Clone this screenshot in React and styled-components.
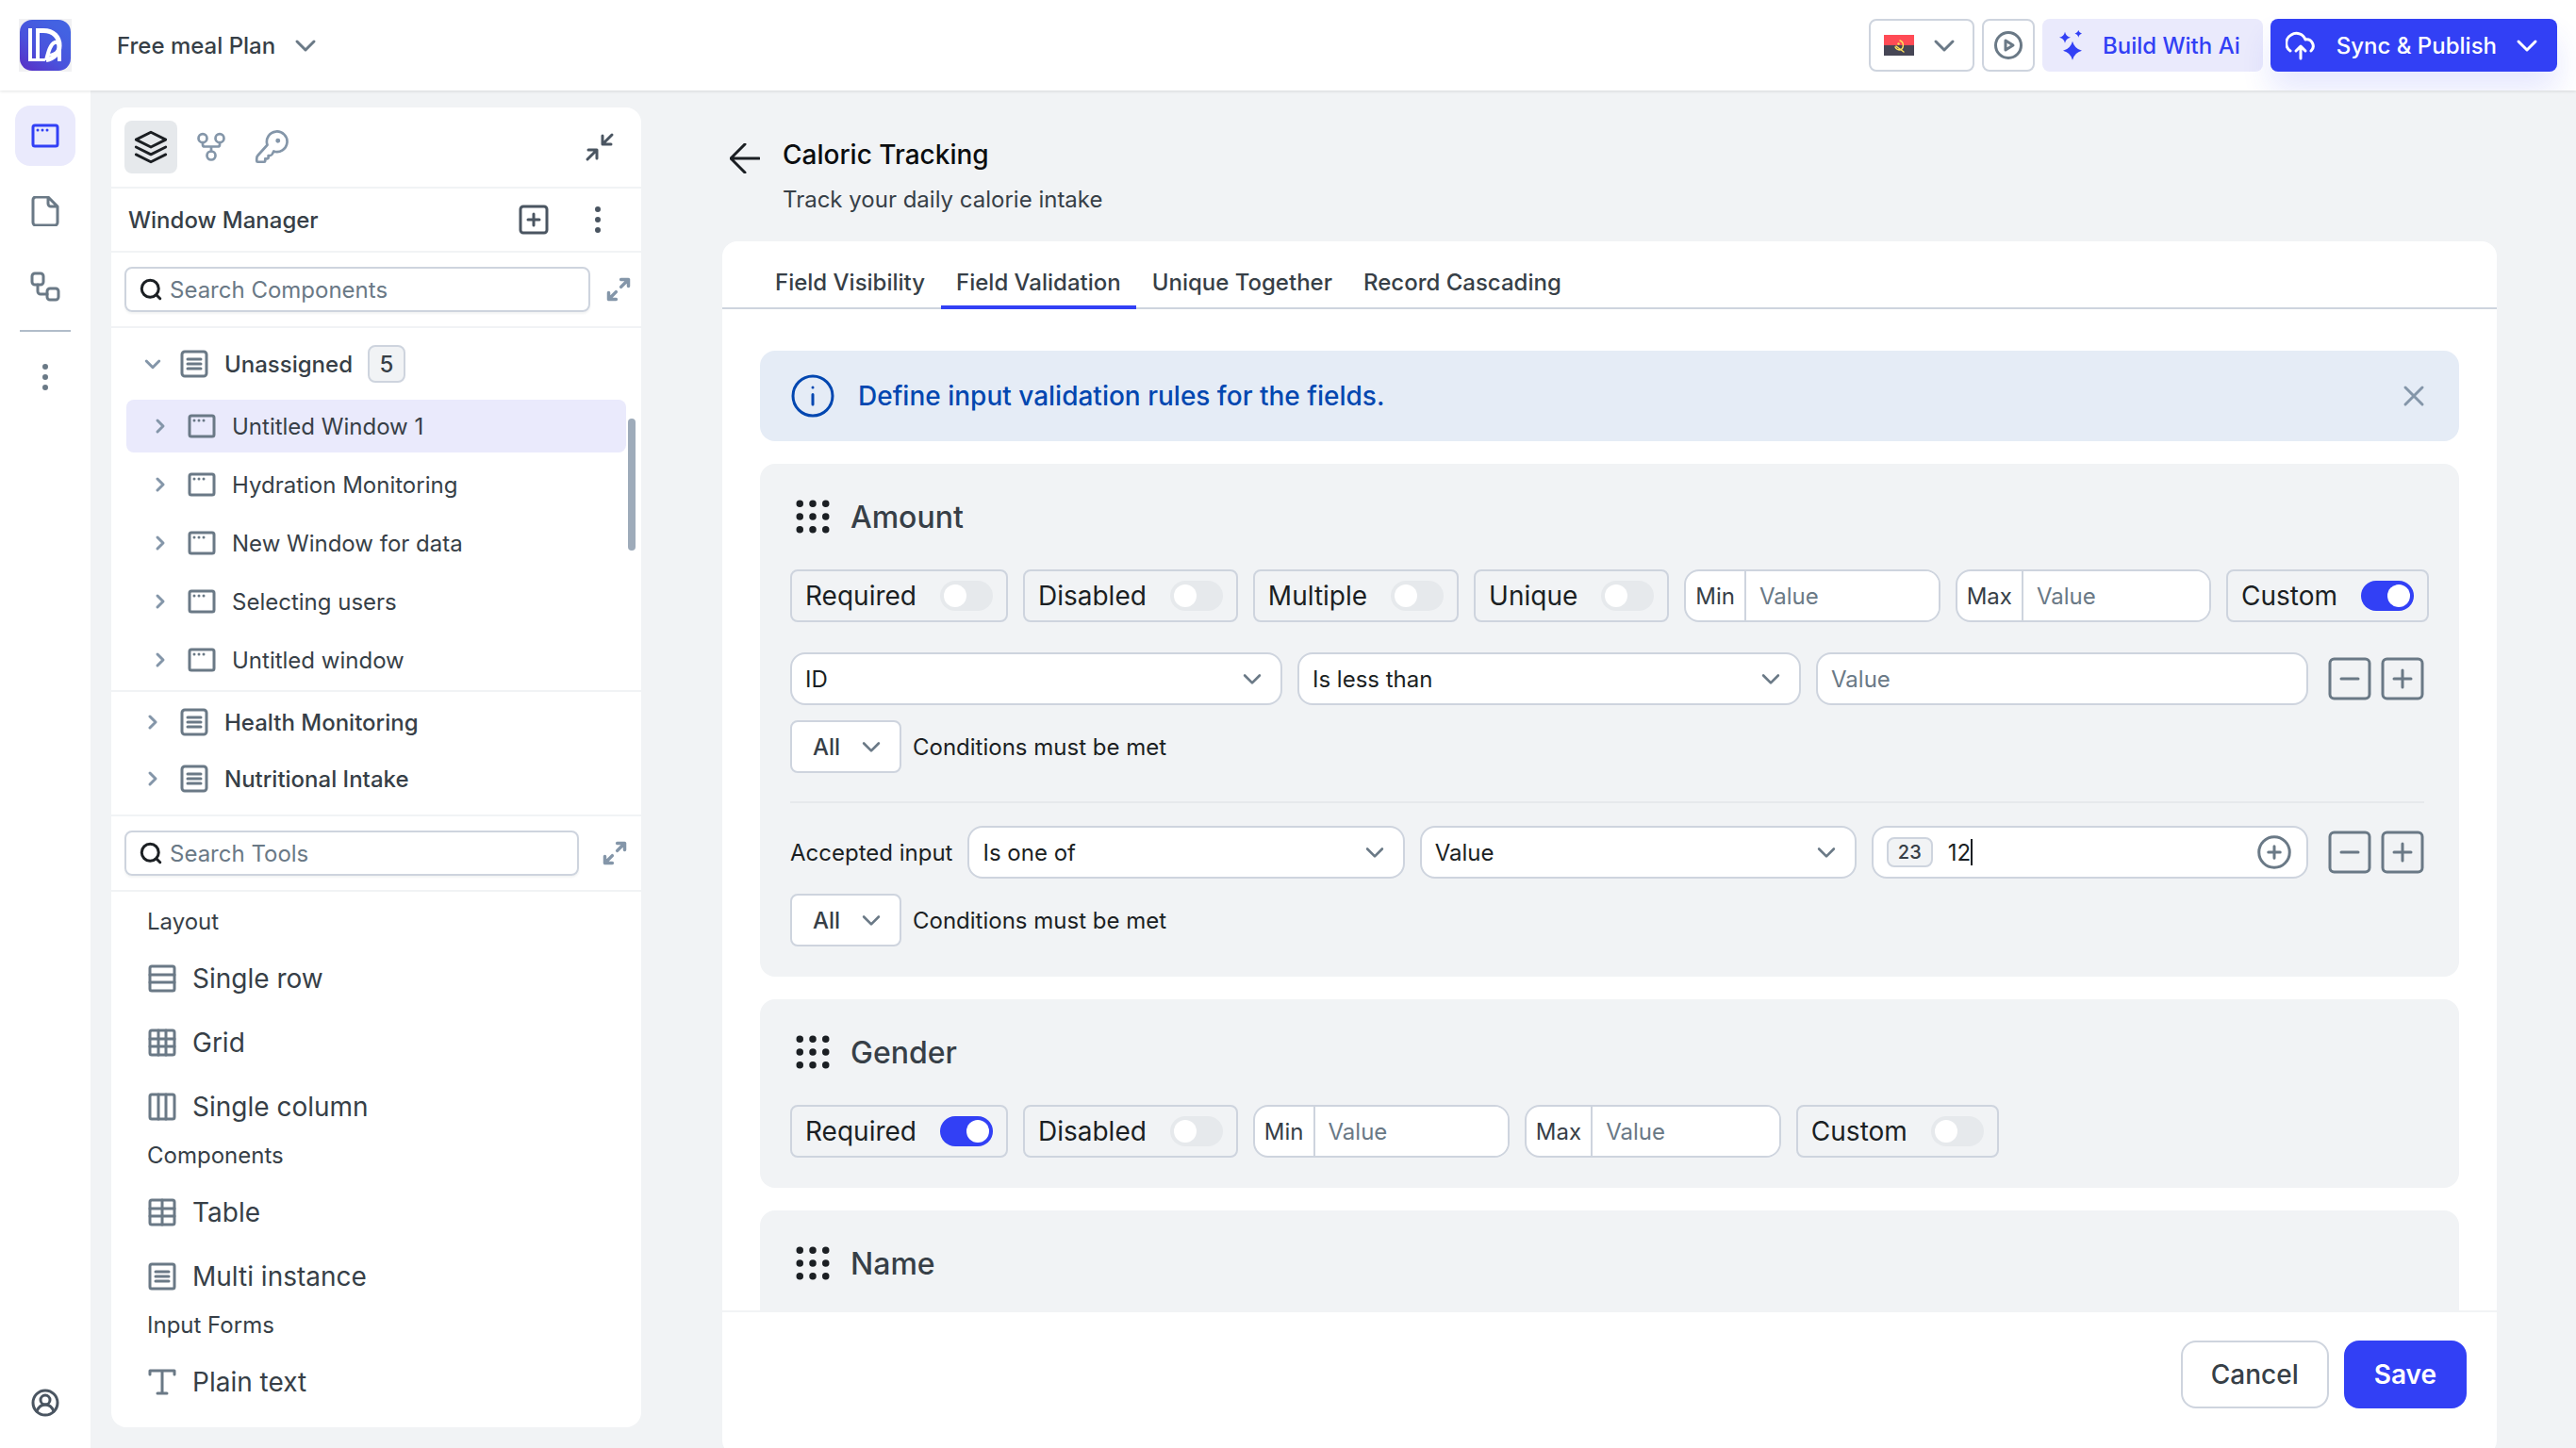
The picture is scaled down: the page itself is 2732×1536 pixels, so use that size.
import { useId, useState } from 'react'
import styled, { createGlobalStyle, css } from 'styled-components'

const color = {
  page: '#f1f3f5',
  white: '#ffffff',
  line: '#f1f3f5',
  border: '#ced4de',
  ink: '#1b1f23',
  text: '#373f47',
  slate: '#6a7986',
  slateLight: '#8496a9',
  slateDark: '#4a5561',
  primary: '#3240f5',
  primarySoft: '#eaeafc',
  info: '#0247b0',
  infoSoft: '#e5ecf6',
  off: '#e6e9ec',
}

const GlobalStyle = createGlobalStyle`
  * {
    box-sizing: border-box;
  }

  body {
    margin: 0;
    background: ${color.page};
    color: ${color.text};
    font-family: Inter, 'Liberation Sans', sans-serif;
    font-size: 24px;
  }

  button, input, select {
    margin: 0;
    font: inherit;
    color: inherit;
  }

  svg {
    display: block;
    flex: none;
  }
`

/* Icons */

const Icon = ({ size = 32, weight = 2, children, ...props }) => (
  <svg
    width={size}
    height={size}
    viewBox="0 0 32 32"
    fill="none"
    stroke="currentColor"
    strokeWidth={weight}
    strokeLinecap="round"
    strokeLinejoin="round"
    aria-hidden="true"
    {...props}
  >
    {children}
  </svg>
)

const LogoIcon = () => (
  <svg width="56" height="56" viewBox="0 0 56 56" aria-hidden="true">
    <defs>
      <linearGradient id="logo" x1="0" y1="1" x2="0.7" y2="0.1">
        <stop offset="0" stopColor="#5a2cc4" />
        <stop offset="0.5" stopColor="#4a52dc" />
        <stop offset="1" stopColor="#4362e2" />
      </linearGradient>
    </defs>
    <rect width="56" height="56" fill="#f1f1f3" />
    <rect x="1" y="1" width="54" height="54" rx="13" fill="url(#logo)" />
    <g fill="none" stroke="#fff">
      <path d="M12 10v35" strokeWidth="4" />
      <path d="M10 43.500h18" strokeWidth="3" />
      <path d="M20 12v31" strokeWidth="4" />
      <path d="M18 12.500h8c11 0 17 7 17 16 0 8-6 14-14 15" strokeWidth="5" />
      <path d="M29 44c2-8 4-17 9-19 3-1 5 2 5 6v14" strokeWidth="4" />
      <path d="M31 38c4 1 7-1 10-4" strokeWidth="3" />
    </g>
  </svg>
)

const ChevronDown = ({ size = 32, weight = 3 }) => (
  <Icon size={size} weight={weight}>
    <path d="M7 12l9 9 9-9" />
  </Icon>
)

const ChevronRight = () => (
  <Icon size={24} weight={4}>
    <path d="M12 8l8 8-8 8" />
  </Icon>
)

const WindowIcon = () => (
  <Icon weight={3}>
    <rect x="3" y="5" width="26" height="22" rx="2" />
    <path d="M8 10h0M13 10h0M18 10h0" />
  </Icon>
)

const ListIcon = () => (
  <Icon weight={3}>
    <rect x="3" y="3" width="26" height="26" rx="3" />
    <path d="M9 11h14M9 16h14M9 21h14" />
  </Icon>
)

const PageIcon = () => (
  <Icon weight={3}>
    <path d="M19 1H6a3 3 0 0 0-3 3v24a3 3 0 0 0 3 3h20a3 3 0 0 0 3-3V11L19 1v7a3 3 0 0 0 3 3h7" />
  </Icon>
)

const FlowIcon = () => (
  <Icon weight={3}>
    <rect x="2" y="2" width="12" height="12" rx="3" />
    <rect x="18" y="18" width="12" height="12" rx="3" />
    <path d="M8 14v7a3 3 0 0 0 3 3h7" />
  </Icon>
)

const DotsIcon = () => (
  <Icon weight={6}>
    <path d="M16 5h0M16 16h0M16 27h0" />
  </Icon>
)

const UserIcon = () => (
  <Icon weight={3}>
    <circle cx="16" cy="16" r="13" />
    <circle cx="16" cy="13" r="5" />
    <path d="M7 25c2-5 5-7 9-7s7 2 9 7" />
  </Icon>
)

const LayersIcon = () => (
  <Icon size={36} weight={2.5}>
    <path d="M16 2L30 9 16 16 2 9z" />
    <path d="M2 16l14 7 14-7M2 23l14 7 14-7" />
  </Icon>
)

const ForkIcon = () => (
  <Icon weight={2.7}>
    <circle cx="7" cy="6.7" r="4.5" />
    <circle cx="25" cy="6.7" r="4.5" />
    <circle cx="16" cy="25" r="4.5" />
    <path d="M7 11.5v2q0 2 2 2h14q2 0 2-2v-2M16 15.500v5" />
  </Icon>
)

const KeyIcon = () => (
  <Icon size={36} weight={2.4}>
    <path d="M12 14L3 24q-1 1-1 3v2q0 1 1 1h6q1 0 1-1v-2h2q1 0 1-1v-2h2q1 0 2-2l1-2A9.600 9.600 0 1 0 12 14z" />
    <circle cx="22" cy="10" r="1" fill="currentColor" />
  </Icon>
)

const CollapseIcon = () => (
  <Icon weight={3}>
    <path d="M29 3l-9 9M19 4v9h9M3 29l9-9M4 19h9v9" />
  </Icon>
)

const ExpandIcon = () => (
  <Icon size={28} weight={4}>
    <path d="M28 4l-9 9M19 4h9v8M4 28l9-9M4 20v8h9" />
  </Icon>
)

const SearchIcon = () => (
  <Icon size={24} weight={4}>
    <circle cx="15" cy="15" r="12" />
    <path d="M24 24l5 5" />
  </Icon>
)

const PlusSquareIcon = ({ size = 32, weight = 3 }) => (
  <Icon size={size} weight={weight}>
    <rect x="2" y="2" width="28" height="28" rx="3" />
    <path d="M10 16h12M16 10v12" />
  </Icon>
)

const MinusSquareIcon = ({ size = 32, weight = 3 }) => (
  <Icon size={size} weight={weight}>
    <rect x="2" y="2" width="28" height="28" rx="3" />
    <path d="M10 16h12" />
  </Icon>
)

const PlusCircleIcon = () => (
  <Icon size={40} weight={2.4}>
    <circle cx="16" cy="16" r="13" />
    <path d="M11 16h10M16 11v10" />
  </Icon>
)

const PlayIcon = () => (
  <Icon weight={3}>
    <circle cx="16" cy="16" r="13.5" />
    <path d="M13 11v10l8-5z" />
  </Icon>
)

const SparkleIcon = () => (
  <svg width="32" height="32" viewBox="0 0 32 32" fill="currentColor" aria-hidden="true">
    <path d="M16 11.700Q18 19.700 26 21.700 18 23.700 16 31.700 14 23.700 6 21.700 14 19.700 16 11.700z" />
    <path d="M8 1.700Q9 6.700 14 7.700 9 8.700 8 13.700 7 8.700 2 7.700 7 6.700 8 1.700z" />
    <path d="M22.300 0Q23 3 26 3.700 23 4.400 22.300 7.700 21.600 4.400 18.500 3.700 21.600 3 22.300 0z" />
  </svg>
)

const CloudUpIcon = () => (
  <Icon weight={3}>
    <path d="M5 22a10 10 0 0 1 1-17 10 10 0 0 1 15 5 7 7 0 0 1 6 12" />
    <path d="M16 30V17M11 22l5-5 5 5" />
  </Icon>
)

const FlagIcon = () => (
  <svg width="32" height="22" viewBox="0 0 32 22" aria-hidden="true">
    <rect width="32" height="11" fill="#ff4b55" />
    <rect y="11" width="32" height="11" fill="#464655" />
    <g fill="none" stroke="#ffe15a" strokeWidth="1.400" strokeLinecap="round">
      <path d="M17 6c5 2 4 9 0 10-2 0-4-1-5-3M13 12l8 6" />
    </g>
    <circle cx="15.500" cy="9.500" r="1.200" fill="#ffe15a" />
  </svg>
)

const ArrowLeftIcon = () => (
  <Icon weight={3}>
    <path d="M31 16H1M16 1L1 16l15 15" />
  </Icon>
)

const InfoIcon = () => (
  <Icon size={48} weight={2}>
    <circle cx="16" cy="16" r="14" />
    <path d="M16 15v7M16 10h0" />
  </Icon>
)

const CloseIcon = () => (
  <Icon weight={3}>
    <path d="M7 7l18 18M25 7L7 25" />
  </Icon>
)

const GripIcon = () => (
  <Icon size={40} weight={6}>
    {[5, 16, 27].map(y => (
      <path key={y} d={`M5 ${y}h0M16 ${y}h0M27 ${y}h0`} />
    ))}
  </Icon>
)

const toolPaths = {
  row: 'M3 12h26M3 20h26',
  grid: 'M3 12h26M3 20h26M12 3v26M20 3v26',
  column: 'M12 3v26M20 3v26',
  table: 'M3 12h26M3 20h26M16 3v26',
  list: 'M9 11h14M9 16h14M9 21h14',
}

const ToolIcon = ({ kind }) => (
  <Icon weight={3}>
    {kind === 'text' ? (
      <path d="M3 8V4h26v4M16 4v24M11 28h10" />
    ) : (
      <>
        <rect x="3" y="3" width="26" height="26" rx="2" />
        <path d={toolPaths[kind]} />
      </>
    )}
  </Icon>
)

/* Data */

const windows = [
  'Untitled Window 1',
  'Hydration Monitoring',
  'New Window for data',
  'Selecting users',
  'Untitled window',
]

const tools = [
  {
    title: 'Layout',
    items: [['row', 'Single row'], ['grid', 'Grid'], ['column', 'Single column']],
  },
  {
    title: 'Components',
    items: [['table', 'Table'], ['list', 'Multi instance']],
  },
  {
    title: 'Input Forms',
    items: [['text', 'Plain text']],
  },
]

const tabs = ['Field Visibility', 'Field Validation', 'Unique Together', 'Record Cascading']

/* Form parts */

const Toggle = ({ label, on = false }) => (
  <ToggleLabel>
    {label}
    <Switch type="checkbox" role="switch" defaultChecked={on} />
  </ToggleLabel>
)

const Limit = ({ label }) => {
  const id = useId()

  return (
    <LimitBox>
      <LimitLabel htmlFor={id}>{label}</LimitLabel>
      <LimitInput id={id} placeholder="Value" />
    </LimitBox>
  )
}

const Dropdown = ({ label, options, basis }) => (
  <SelectBox basis={basis}>
    <Select aria-label={label}>
      {options.map(option => (
        <option key={option}>{option}</option>
      ))}
    </Select>
    <ChevronDown size={28} />
  </SelectBox>
)

const Match = () => (
  <MatchRow>
    <SelectBox compact>
      <Select compact aria-label="Match">
        <option>All</option>
        <option>Any</option>
      </Select>
      <ChevronDown size={28} />
    </SelectBox>
    Conditions must be met
  </MatchRow>
)

const RowActions = () => (
  <Actions>
    <IconButton aria-label="Remove condition">
      <MinusSquareIcon size={48} weight={2} />
    </IconButton>
    <IconButton aria-label="Add condition">
      <PlusSquareIcon size={48} weight={2} />
    </IconButton>
  </Actions>
)

const Field = ({ title, children }) => (
  <FieldCard>
    <FieldTitle>
      <GripIcon />
      {title}
    </FieldTitle>
    {children}
  </FieldCard>
)

const Search = ({ label, expandLabel, wide = false }) => (
  <SearchRow wide={wide}>
    <SearchBox>
      <SearchIcon />
      <SearchInput type="search" aria-label={label} placeholder={label} />
    </SearchBox>
    <IconButton light aria-label={expandLabel}>
      <ExpandIcon />
    </IconButton>
  </SearchRow>
)

const Header = () => (
  <TopBar>
    <LogoIcon />
    <PlanButton>
      Free meal Plan
      <ChevronDown />
    </PlanButton>
    <TopActions>
      <OutlineButton aria-label="Language">
        <FlagIcon />
        <ChevronDown />
      </OutlineButton>
      <OutlineButton square aria-label="Preview">
        <PlayIcon />
      </OutlineButton>
      <SoftButton>
        <SparkleIcon />
        Build With Ai
      </SoftButton>
      <PublishButton>
        <CloudUpIcon />
        Sync &amp; Publish
        <ChevronDown />
      </PublishButton>
    </TopActions>
  </TopBar>
)

const Sidebar = () => (
  <Rail>
    <RailButton active aria-label="Windows">
      <WindowIcon />
    </RailButton>
    <RailButton aria-label="Pages">
      <PageIcon />
    </RailButton>
    <RailButton aria-label="Workflows">
      <FlowIcon />
    </RailButton>
    <RailLine />
    <RailButton aria-label="More">
      <DotsIcon />
    </RailButton>
    <AccountButton aria-label="Account">
      <UserIcon />
    </AccountButton>
  </Rail>
)

const Explorer = () => (
  <Panel>
    <PanelTools>
      <PanelTab active aria-label="Layers">
        <LayersIcon />
      </PanelTab>
      <PanelTab aria-label="Branches">
        <ForkIcon />
      </PanelTab>
      <PanelTab aria-label="Keys">
        <KeyIcon />
      </PanelTab>
      <CollapseButton aria-label="Collapse">
        <CollapseIcon />
      </CollapseButton>
    </PanelTools>

    <PanelHeading>
      <PanelTitle>Window Manager</PanelTitle>
      <DarkButton aria-label="Add window">
        <PlusSquareIcon />
      </DarkButton>
      <DarkButton aria-label="Window options">
        <DotsIcon />
      </DarkButton>
    </PanelHeading>

    <Search wide label="Search Components" expandLabel="Expand components" />

    <Tree>
      <GroupRow open>
        <ChevronDown size={24} weight={4} />
        <ListIcon />
        Unassigned
        <Count>5</Count>
      </GroupRow>
      <WindowList>
        {windows.map((name, i) => (
          <WindowRow key={name} active={i === 0}>
            <ChevronRight />
            <WindowIcon />
            {name}
          </WindowRow>
        ))}
        <ScrollThumb />
      </WindowList>
    </Tree>
    <Groups>
      {['Health Monitoring', 'Nutritional Intake'].map(name => (
        <GroupRow key={name}>
          <ChevronRight />
          <ListIcon />
          {name}
        </GroupRow>
      ))}
    </Groups>

    <Search label="Search Tools" expandLabel="Expand tools" />

    <ToolList>
      {tools.map(group => (
        <section key={group.title}>
          <ToolHeading>{group.title}</ToolHeading>
          {group.items.map(([kind, label]) => (
            <ToolButton key={kind}>
              <ToolIcon kind={kind} />
              {label}
            </ToolButton>
          ))}
        </section>
      ))}
    </ToolList>
  </Panel>
)

const App = () => {
  const [tab, setTab] = useState('Field Validation')
  const [notice, setNotice] = useState(true)

  return (
    <Page>
      <GlobalStyle />
      <Header />
      <Body>
        <Sidebar />
        <Explorer />
        <Main>
          <MainHeader>
            <BackButton aria-label="Back">
              <ArrowLeftIcon />
            </BackButton>
            <div>
              <Title>Caloric Tracking</Title>
              <Subtitle>Track your daily calorie intake</Subtitle>
            </div>
          </MainHeader>

          <Card>
            <Tabs role="tablist">
              {tabs.map(name => (
                <Tab
                  key={name}
                  role="tab"
                  aria-selected={tab === name}
                  active={tab === name}
                  onClick={() => setTab(name)}
                >
                  {name}
                </Tab>
              ))}
            </Tabs>

            <Fields>
              {notice && (
                <Notice>
                  <InfoIcon />
                  Define input validation rules for the fields.
                  <CloseButton aria-label="Close" onClick={() => setNotice(false)}>
                    <CloseIcon />
                  </CloseButton>
                </Notice>
              )}

              <Field title="Amount">
                <Row>
                  <Toggle label="Required" />
                  <Toggle label="Disabled" />
                  <Toggle label="Multiple" />
                  <Toggle label="Unique" />
                  <Limit label="Min" />
                  <Limit label="Max" />
                  <Toggle label="Custom" on />
                </Row>
                <ConditionRow>
                  <Dropdown label="Field" options={['ID']} basis={320} />
                  <Dropdown label="Operator" options={['Is less than']} basis={332} />
                  <ValueInput aria-label="Value" placeholder="Value" />
                  <RowActions />
                </ConditionRow>
                <Match />
                <Divider />
                <Row>
                  Accepted input
                  <Dropdown label="Operator" options={['Is one of']} />
                  <Dropdown label="Source" options={['Value']} />
                  <TagBox>
                    <Tag>23</Tag>
                    <TagEntry>
                      <TagInput aria-label="Accepted values" defaultValue="12" />
                      <Caret />
                    </TagEntry>
                    <IconButton aria-label="Add value">
                      <PlusCircleIcon />
                    </IconButton>
                  </TagBox>
                  <RowActions />
                </Row>
                <Match />
              </Field>

              <Field title="Gender">
                <Row>
                  <Toggle label="Required" on />
                  <Toggle label="Disabled" />
                  <Limit label="Min" />
                  <Limit label="Max" />
                  <Toggle label="Custom" />
                </Row>
              </Field>

              <Field title="Name" />
            </Fields>

            <Footer>
              <CancelButton>Cancel</CancelButton>
              <SaveButton>Save</SaveButton>
            </Footer>
          </Card>
        </Main>
      </Body>
    </Page>
  )
}

export default App

/* Layout */

const Page = styled.div`
  display: flex;
  flex-direction: column;
  height: 100vh;
  overflow: hidden;
`

const Body = styled.div`
  display: flex;
  flex: 1;
  min-height: 0;
`

const buttonReset = css`
  display: flex;
  align-items: center;
  padding: 0;
  border: 0;
  background: none;
  cursor: pointer;
`

const TopBar = styled.header`
  display: flex;
  align-items: center;
  flex: none;
  height: 96px;
  padding: 0 20px;
  overflow: hidden;
  background: ${color.white};
  box-shadow: 0 1px 3px rgba(27, 31, 35, 0.12);
  z-index: 1;
`

const PlanButton = styled.button`
  ${buttonReset};
  gap: 16px;
  margin-left: 48px;
  font-weight: 500;

  svg {
    color: ${color.slate};
  }
`

const TopActions = styled.div`
  display: flex;
  gap: 8px;
  margin-left: auto;
`

const OutlineButton = styled.button.withConfig({ shouldForwardProp: p => p !== 'square' })`
  ${buttonReset};
  justify-content: center;
  gap: 16px;
  width: ${p => (p.square ? 56 : 112)}px;
  height: 56px;
  border: 2px solid ${color.border};
  border-radius: 8px;
  color: ${color.slate};
`

const SoftButton = styled.button`
  ${buttonReset};
  gap: 16px;
  height: 56px;
  padding: 0 24px 0 16px;
  border-radius: 8px;
  background: ${color.primarySoft};
  color: ${color.primary};
  font-weight: 500;
`

const PublishButton = styled.button`
  ${buttonReset};
  gap: 16px;
  height: 56px;
  padding: 0 16px;
  border-radius: 8px;
  background: ${color.primary};
  box-shadow: 0 20px 32px rgba(50, 64, 245, 0.12);
  color: ${color.white};
  font-weight: 500;

  svg:first-child {
    margin-right: 6px;
  }
`

const Rail = styled.nav`
  display: flex;
  flex-direction: column;
  align-items: center;
  gap: 16px;
  flex: none;
  width: 96px;
  padding: 16px 0;
  background: ${color.white};
`

const RailButton = styled.button.withConfig({ shouldForwardProp: p => p !== 'active' })`
  ${buttonReset};
  justify-content: center;
  width: 64px;
  height: 64px;
  border-radius: 16px;
  background: ${p => (p.active ? color.primarySoft : 'transparent')};
  color: ${p => (p.active ? color.primary : color.slate)};
`

const RailLine = styled.hr`
  width: 54px;
  margin: -2px 0 0;
  border: 0;
  border-top: 2px solid #b1bdca;
`

const AccountButton = styled(RailButton)`
  margin-top: auto;
  color: ${color.slateDark};
`

/* Explorer */

const Panel = styled.aside`
  flex: none;
  align-self: flex-start;
  width: 562px;
  margin: 18px 0 0 22px;
  border-radius: 16px;
  background: ${color.white};
`

const PanelTools = styled.div`
  display: flex;
  align-items: center;
  gap: 8px;
  height: 86px;
  padding: 0 28px 0 14px;
  border-bottom: 2px solid ${color.line};
`

const PanelTab = styled.button.withConfig({ shouldForwardProp: p => p !== 'active' })`
  ${buttonReset};
  justify-content: center;
  width: 56px;
  height: 56px;
  border-radius: 8px;
  background: ${p => (p.active ? color.off : 'transparent')};
  color: ${p => (p.active ? color.ink : color.slateLight)};
`

const CollapseButton = styled.button`
  ${buttonReset};
  margin-left: auto;
  color: ${color.slateDark};
`

const PanelHeading = styled.div`
  display: flex;
  align-items: center;
  gap: 36px;
  height: 68px;
  padding: 0 30px 0 18px;
  border-bottom: 2px solid ${color.line};
`

const PanelTitle = styled.h2`
  flex: 1;
  margin: 0;
  font-size: 24px;
  font-weight: 500;
`

const DarkButton = styled.button`
  ${buttonReset};
  color: ${color.slateDark};
`

const IconButton = styled.button.withConfig({ shouldForwardProp: p => p !== 'light' })`
  ${buttonReset};
  color: ${p => (p.light ? color.slateLight : color.slate)};
`

const SearchRow = styled.div.withConfig({ shouldForwardProp: p => p !== 'wide' })`
  display: flex;
  align-items: center;
  gap: ${p => (p.wide ? 16 : 24)}px;
  height: 80px;
  padding: 0 ${p => (p.wide ? 10 : 14)}px 0 14px;
  border-bottom: 2px solid ${color.line};
`

const SearchBox = styled.label`
  display: flex;
  flex: 1;
  align-items: center;
  gap: 8px;
  height: 48px;
  padding: 0 14px;
  border: 2px solid ${color.border};
  border-radius: 8px;
  box-shadow: 0 2px 2px rgba(27, 31, 35, 0.05);
  color: ${color.ink};
`

const SearchInput = styled.input`
  flex: 1;
  min-width: 0;
  padding: 0;
  border: 0;
  outline: 0;
  background: none;

  &::placeholder {
    color: ${color.slate};
    opacity: 1;
  }
`

const Tree = styled.div`
  padding-bottom: 4px;
  border-bottom: 2px solid ${color.line};
`

const GroupRow = styled.button.withConfig({ shouldForwardProp: p => p !== 'open' })`
  ${buttonReset};
  width: 100%;
  gap: 16px;
  height: ${p => (p.open ? 76 : 60)}px;
  padding-left: 32px;
  font-weight: 500;

  svg {
    color: ${color.slate};
  }

  svg:first-child {
    color: ${color.slateLight};
  }
`

const Count = styled.span`
  display: flex;
  align-items: center;
  justify-content: center;
  width: 40px;
  height: 40px;
  border: 2px solid ${color.border};
  border-radius: 8px;
  background: ${color.page};
`

const WindowList = styled.div`
  position: relative;
  display: flex;
  flex-direction: column;
  gap: 6px;
  padding: 0 16px;
`

const WindowRow = styled.button.withConfig({ shouldForwardProp: p => p !== 'active' })`
  ${buttonReset};
  gap: 16px;
  height: 56px;
  padding-left: 24px;
  border-radius: 8px;
  background: ${p => (p.active ? color.primarySoft : 'transparent')};

  svg {
    color: ${color.slate};
  }

  svg:first-child {
    color: ${color.slateLight};
  }
`

const ScrollThumb = styled.span`
  position: absolute;
  top: 20px;
  right: 6px;
  width: 8px;
  height: 140px;
  border-radius: 4px;
  background: #9eabba;
`

const Groups = styled.div`
  padding: 2px 0 8px;
  border-bottom: 2px solid ${color.line};
`

const ToolList = styled.div`
  padding: 14px 0;
`

const ToolHeading = styled.h3`
  margin: 0 0 8px;
  padding-left: 38px;
  font-size: 24px;
  font-weight: 400;
  line-height: 36px;
`

const ToolButton = styled.button`
  ${buttonReset};
  gap: 16px;
  width: 100%;
  height: 68px;
  padding-left: 38px;
  font-size: 28px;

  svg {
    color: ${color.slate};
  }
`

/* Main */

const Main = styled.main`
  display: flex;
  flex: 1;
  flex-direction: column;
  min-width: 0;
  margin: 0 84px -8px 86px;
`

const MainHeader = styled.div`
  display: flex;
  gap: 24px;
  flex: none;
  height: 160px;
  padding: 48px 0 0 8px;
`

const BackButton = styled.button`
  ${buttonReset};
  height: 48px;
  color: ${color.ink};
`

const Title = styled.h1`
  margin: 0;
  color: #0b0d0f;
  font-size: 28px;
  font-weight: 500;
  line-height: 40px;
`

const Subtitle = styled.p`
  margin: 10px 0 0;
  line-height: 36px;
`

const Card = styled.section`
  display: flex;
  flex: 1;
  flex-direction: column;
  min-height: 0;
  overflow: hidden;
  border-radius: 16px;
  background: ${color.white};
`

const Tabs = styled.div`
  display: flex;
  flex: none;
  gap: 1px;
  height: 72px;
  padding: 0 40px;
  box-shadow: inset 0 -2px ${color.border};
`

const Tab = styled.button.withConfig({ shouldForwardProp: p => p !== 'active' })`
  ${buttonReset};
  padding: 18px 16px 0;
  border-bottom: 4px solid ${p => (p.active ? color.primary : 'transparent')};
  font-weight: 500;
`

const Fields = styled.div`
  display: flex;
  flex: 1;
  flex-direction: column;
  gap: 24px;
  min-height: 0;
  padding: 44px 40px 0;
  overflow: hidden;
`

const Notice = styled.div`
  display: flex;
  flex: none;
  align-items: center;
  gap: 24px;
  height: 96px;
  padding: 0 32px;
  border-radius: 16px;
  background: ${color.infoSoft};
  color: ${color.info};
  font-size: 28px;
  font-weight: 500;
`

const CloseButton = styled.button`
  ${buttonReset};
  margin-left: auto;
  color: ${color.slateLight};
`

const FieldCard = styled.section`
  flex: none;
  min-height: 200px;
  padding: 28px 32px 32px;
  border-radius: 16px;
  background: ${color.page};
  color: ${color.ink};
`

const FieldTitle = styled.h2`
  display: flex;
  align-items: center;
  gap: 20px;
  height: 56px;
  margin: 0 0 28px;
  padding-left: 4px;
  color: ${color.text};
  font-size: 32px;
  font-weight: 500;

  svg {
    color: ${color.ink};
  }
`

const Row = styled.div`
  display: flex;
  align-items: center;
  gap: 16px;
`

const ConditionRow = styled(Row)`
  margin-top: 32px;
`

const MatchRow = styled(Row)`
  gap: 12px;
  margin-top: 16px;
`

const Divider = styled.hr`
  margin: 30px 5px 24px 0;
  border: 0;
  border-top: 2px solid ${color.off};
`

const ToggleLabel = styled.label`
  display: flex;
  align-items: center;
  gap: 25px;
  height: 56px;
  padding: 0 14px;
  border: 2px solid ${color.border};
  border-radius: 8px;
  font-size: 28px;
`

const Switch = styled.input`
  appearance: none;
  width: 56px;
  height: 32px;
  padding: 4px;
  border-radius: 16px;
  background: ${color.off};

  &::before {
    content: '';
    display: block;
    width: 24px;
    height: 24px;
    border-radius: 12px;
    background: ${color.white};
  }

  &:checked {
    background: ${color.primary};
  }

  &:checked::before {
    margin-left: auto;
  }
`

const fieldBox = css`
  height: 56px;
  border: 2px solid ${color.border};
  border-radius: 16px;
  background: ${color.white};
`

const LimitBox = styled.div`
  ${fieldBox};
  display: flex;
  width: 272px;
  overflow: hidden;
`

const LimitLabel = styled.label`
  display: flex;
  align-items: center;
  padding: 0 10px;
  border-right: 2px solid ${color.border};
  color: ${color.text};
`

const LimitInput = styled.input`
  flex: 1;
  min-width: 0;
  padding: 0 14px;
  border: 0;
  outline: 0;

  &::placeholder {
    color: ${color.slate};
    opacity: 1;
  }
`

const SelectBox = styled.div.withConfig({
  shouldForwardProp: p => !['basis', 'compact'].includes(p),
})`
  ${fieldBox};
  display: grid;
  flex: 1 1 ${p => p.basis || 320}px;
  align-items: center;
  min-width: 0;

  ${p =>
    p.compact &&
    css`
      flex: none;
      width: 118px;
      border-radius: 8px;
    `};

  > * {
    grid-area: 1 / 1;
  }

  svg {
    justify-self: end;
    margin-right: 16px;
    color: ${color.slate};
    pointer-events: none;
  }
`

const Select = styled.select.withConfig({ shouldForwardProp: p => p !== 'compact' })`
  appearance: none;
  width: 100%;
  height: 100%;
  padding: 0 ${p => (p.compact ? 22 : 14)}px;
  border: 0;
  outline: 0;
  background: none;
  color: ${p => (p.compact ? color.text : color.ink)};
  font-weight: ${p => (p.compact ? 500 : 400)};
`

const ValueInput = styled.input`
  ${fieldBox};
  flex: 1 1 320px;
  min-width: 0;
  padding: 0 14px;

  &::placeholder {
    color: ${color.slate};
    opacity: 1;
  }
`

const TagBox = styled.div`
  ${fieldBox};
  display: flex;
  flex: 1 1 320px;
  align-items: center;
  gap: 16px;
  min-width: 0;
  padding: 0 14px;
`

const Tag = styled.span`
  display: flex;
  align-items: center;
  height: 32px;
  padding: 0 10px;
  border: 2px solid ${color.border};
  border-radius: 8px;
  background: ${color.page};
  color: ${color.text};
  font-size: 20px;
  font-weight: 500;
`

const TagEntry = styled.span`
  display: flex;
  flex: 1;
  align-items: center;
  min-width: 0;
`

const TagInput = styled.input`
  field-sizing: content;
  padding: 0;
  border: 0;
  outline: 0;
  caret-color: transparent;
`

const Caret = styled.span`
  width: 2px;
  height: 28px;
  background: ${color.ink};
`

const Actions = styled.div`
  display: flex;
  gap: 8px;
  padding: 0 4px;
`

const Footer = styled.footer`
  display: flex;
  flex: none;
  justify-content: flex-end;
  gap: 16px;
  padding: 30px 32px 50px;
  border-top: 2px solid ${color.line};
`

const CancelButton = styled.button`
  ${buttonReset};
  height: 72px;
  padding: 0 30px;
  border: 2px solid ${color.border};
  border-radius: 16px;
  font-size: 28px;
  font-weight: 500;
`

const SaveButton = styled(CancelButton)`
  border-color: ${color.primary};
  background: ${color.primary};
  color: ${color.white};
  font-weight: 600;
`
